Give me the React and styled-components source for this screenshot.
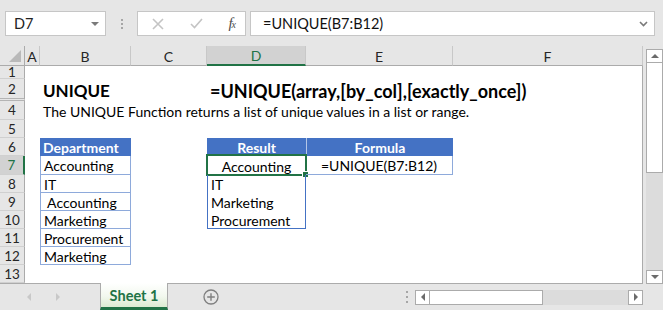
import React from 'react';
import styled, { createGlobalStyle, css } from 'styled-components';

const GREEN = '#217346';
const BLUE = '#4472c4';
const LIGHT_BLUE = '#8eaadb';

const GlobalStyle = createGlobalStyle`
  html, body {
    margin: 0;
    padding: 0;
    background: #e6e6e6;
  }
  body {
    font-family: Lato, "Liberation Sans", sans-serif;
    color: #000;
  }
`;

const Window = styled.div`
  width: 663px;
  height: 310px;
  background: #e6e6e6;
  display: flex;
  flex-direction: column;
  overflow: hidden;
`;

/* ---------- formula bar ---------- */

const FormulaBar = styled.div`
  height: 46px;
  box-sizing: border-box;
  padding: 11px 0 10px 5px;
  display: flex;
  align-items: stretch;
`;

const Box = styled.div`
  background: #fff;
  border: 1px solid #c6c6c6;
  box-sizing: border-box;
  display: flex;
  align-items: center;
`;

const NameBox = styled(Box)`
  width: 101px;
  padding: 0 6px 0 8px;
  justify-content: space-between;
  font-size: 14.5px;
  color: #222;
`;

const DownTriangle = styled.span`
  width: 0;
  height: 0;
  border-left: 4px solid transparent;
  border-right: 4px solid transparent;
  border-top: 4px solid #7a7a7a;
`;

const Grip = styled.div`
  width: 31px;
  display: flex;
  flex-direction: column;
  align-items: center;
  justify-content: center;
  gap: 2px;

  span {
    width: 2px;
    height: 2px;
    background: #a6a6a6;
  }
`;

const FxBox = styled(Box)`
  width: 109px;
  padding: 0 10px 0 14px;
  justify-content: space-between;
`;

const Fx = styled.span`
  font-family: "Liberation Serif", serif;
  font-style: italic;
  font-size: 15px;
  color: #4d4d4d;
  letter-spacing: -1px;

  sub {
    font-size: 10px;
    vertical-align: baseline;
  }
`;

const FormulaInput = styled(Box)`
  width: 405px;
  margin-left: 4px;
  padding: 0 6px 0 12px;
  justify-content: space-between;
  font-size: 14.5px;
  color: #111;
`;

/* ---------- sheet ---------- */

const Main = styled.div`
  flex: 1;
  display: flex;
  min-height: 0;
`;

const Sheet = styled.div`
  width: 643px;
  background: #fff;
  display: grid;
  grid-template-columns: 25px 15px 91px 76px 99px 147px 190px;
  grid-template-rows: 20px 13px 22px 19px 18px 18px 19px 18px 18px 18px 18px 18px 18px;
  border-right: 1px solid #ababab;
  border-bottom: 1px solid #ababab;
  box-sizing: border-box;
  font-size: 14px;
`;

const Corner = styled.div`
  background: #e6e6e6;
  border-right: 1px solid #ababab;
  border-bottom: 1px solid #ababab;
  position: relative;

  &::after {
    content: '';
    position: absolute;
    right: 3px;
    bottom: 3px;
    border-left: 12px solid transparent;
    border-bottom: 12px solid #b9b9b9;
  }
`;

const ColHead = styled.div`
  background: ${p => (p.$active ? '#d2d2d2' : '#e6e6e6')};
  border-right: 1px solid #c8c8c8;
  border-bottom: ${p => (p.$active ? `2px solid ${GREEN}` : '1px solid #ababab')};
  display: flex;
  align-items: center;
  justify-content: center;
  font-size: 14px;
  color: ${p => (p.$active ? GREEN : '#262626')};
  box-sizing: border-box;
  padding-top: 1px;
`;

const RowHead = styled.div`
  grid-column: 1;
  background: ${p => (p.$active ? '#d2d2d2' : '#e6e6e6')};
  border-right: ${p => (p.$active ? `2px solid ${GREEN}` : '1px solid #ababab')};
  border-bottom: ${p => (p.$hidden ? '3px double #b4b4b4' : '1px solid #d0d0d0')};
  display: flex;
  align-items: center;
  justify-content: center;
  font-size: 13.5px;
  color: ${p => (p.$active ? GREEN : '#262626')};
  box-sizing: border-box;
`;

const Cell = styled.div`
  grid-column: ${p => p.$span || 'auto'};
  display: flex;
  align-items: center;
  justify-content: ${p => (p.$center ? 'center' : 'flex-start')};
  padding: 1px 3px 0;
  white-space: pre;
  box-sizing: border-box;
  position: relative;
  font-size: ${p => p.$size || '14px'};
  font-weight: ${p => (p.$bold ? 700 : 400)};

  ${p => p.$head && css`
    background: ${BLUE};
    color: #fff;
    font-weight: 700;
  `}

  ${p => p.$table && css`
    border-left: 1px solid ${LIGHT_BLUE};
    border-right: 1px solid ${LIGHT_BLUE};
    border-bottom: 1px solid ${LIGHT_BLUE};
  `}

  ${p => p.$spill && css`
    border-left: 1px solid ${BLUE};
    border-right: 1px solid ${BLUE};
  `}

  ${p => p.$spillEnd && css`
    border-bottom: 1px solid ${BLUE};
  `}
`;

const Selection = styled.div`
  position: absolute;
  left: -2px;
  top: -2px;
  right: -2px;
  bottom: -1px;
  border: 2px solid ${GREEN};
  pointer-events: none;

  &::after {
    content: '';
    position: absolute;
    right: -4px;
    bottom: -4px;
    width: 5px;
    height: 5px;
    background: ${GREEN};
    border: 1px solid #fff;
  }
`;

/* ---------- scrollbars ---------- */

const VScroll = styled.div`
  width: 17px;
  margin-left: 3px;
  padding-top: 3px;
  display: flex;
  flex-direction: column;
`;

const ScrollButton = styled.div`
  width: ${p => (p.$vertical ? '17px' : '15px')};
  height: ${p => (p.$vertical ? '14px' : '15px')};
  box-sizing: border-box;
  background: #fff;
  border: 1px solid #ababab;
  display: flex;
  align-items: center;
  justify-content: center;
  flex-shrink: 0;
`;

const Arrow = styled.span`
  width: 0;
  height: 0;
  ${p => p.$dir === 'up' && css`
    border-left: 4px solid transparent;
    border-right: 4px solid transparent;
    border-bottom: 4px solid #6b6b6b;
  `}
  ${p => p.$dir === 'down' && css`
    border-left: 4px solid transparent;
    border-right: 4px solid transparent;
    border-top: 4px solid #6b6b6b;
  `}
  ${p => p.$dir === 'left' && css`
    border-top: 4px solid transparent;
    border-bottom: 4px solid transparent;
    border-right: 4px solid ${p.$light ? '#c8c8c8' : '#6b6b6b'};
  `}
  ${p => p.$dir === 'right' && css`
    border-top: 4px solid transparent;
    border-bottom: 4px solid transparent;
    border-left: 4px solid ${p.$light ? '#c8c8c8' : '#6b6b6b'};
  `}
`;

const VThumb = styled.div`
  height: 110px;
  background: #fff;
  border: 1px solid #ababab;
  border-top: none;
  box-sizing: border-box;
`;

const Track = styled.div`
  flex: 1;
  background: #dcdcdc;
`;

/* ---------- bottom bar ---------- */

const BottomBar = styled.div`
  height: 26px;
  display: flex;
  align-items: stretch;
`;

const Nav = styled.div`
  width: 100px;
  box-sizing: border-box;
  padding-left: 27px;
  display: flex;
  align-items: center;
  gap: 25px;
`;

const SheetTab = styled.div`
  width: 68px;
  box-sizing: border-box;
  margin-top: -1px;
  background: linear-gradient(#ffffff, #f2f8ee 55%, #dcebd2);
  border-left: 1px solid #ababab;
  border-right: 1px solid #ababab;
  border-bottom: 3px solid ${GREEN};
  display: flex;
  align-items: center;
  justify-content: center;
  font-weight: 700;
  font-size: 14.5px;
  color: ${GREEN};
`;

const AddSheet = styled.div`
  margin-left: 35px;
  display: flex;
  align-items: center;
`;

const HArea = styled.div`
  margin-left: auto;
  margin-right: 20px;
  display: flex;
  align-items: center;
`;

const HGrip = styled(Grip)`
  width: 16px;
  gap: 3px;
`;

const HScroll = styled.div`
  width: 228px;
  height: 15px;
  display: flex;
`;

const HThumb = styled.div`
  width: 113px;
  background: #fff;
  border: 1px solid #ababab;
  border-left: none;
  box-sizing: border-box;
`;

const CheckIcon = () => (
  <svg width="13" height="11" viewBox="0 0 13 11">
    <polyline points="1,6 4.5,9.5 12,1" fill="none" stroke="#c4c4c4" strokeWidth="1.6" />
  </svg>
);

const CrossIcon = () => (
  <svg width="12" height="12" viewBox="0 0 12 12">
    <path d="M1 1 L11 11 M11 1 L1 11" stroke="#c4c4c4" strokeWidth="1.6" />
  </svg>
);

const Chevron = () => (
  <svg width="9" height="6" viewBox="0 0 9 6">
    <polyline points="1,1 4.5,4.5 8,1" fill="none" stroke="#7a7a7a" strokeWidth="1.6" />
  </svg>
);

const PlusIcon = () => (
  <svg width="16" height="16" viewBox="0 0 16 16">
    <circle cx="8" cy="8" r="7" fill="none" stroke="#7f7f7f" strokeWidth="1.3" />
    <path d="M8 4.2 V11.8 M4.2 8 H11.8" stroke="#7f7f7f" strokeWidth="1.4" />
  </svg>
);

const columns = ['A', 'B', 'C', 'D', 'E', 'F'];

const departments = ['Accounting', 'IT', ' Accounting', 'Marketing', 'Procurement', 'Marketing'];
const results = ['Accounting', 'IT', 'Marketing', 'Procurement'];

const App = () => (
  <>
    <GlobalStyle />
    <Window>
      <FormulaBar>
        <NameBox>
          D7
          <DownTriangle />
        </NameBox>
        <Grip>
          <span />
          <span />
          <span />
        </Grip>
        <FxBox>
          <CrossIcon />
          <CheckIcon />
          <Fx>f<sub>x</sub></Fx>
        </FxBox>
        <FormulaInput>
          =UNIQUE(B7:B12)
          <Chevron />
        </FormulaInput>
      </FormulaBar>

      <Main>
        <Sheet>
          <Corner />
          {columns.map(c => (
            <ColHead key={c} $active={c === 'D'}>{c}</ColHead>
          ))}

          <RowHead>1</RowHead>
          <Cell $span="2 / 8" />

          <RowHead $hidden>2</RowHead>
          <Cell />
          <Cell $span="3 / 5" $bold $size="17px">UNIQUE</Cell>
          <Cell $span="5 / 8" $bold $size="18px">=UNIQUE(array,[by_col],[exactly_once])</Cell>

          <RowHead>4</RowHead>
          <Cell />
          <Cell $span="3 / 8">The UNIQUE Function returns a list of unique values in a list or range.</Cell>

          <RowHead>5</RowHead>
          <Cell $span="2 / 8" />

          <RowHead>6</RowHead>
          <Cell />
          <Cell $head>Department</Cell>
          <Cell />
          <Cell $head $center>Result</Cell>
          <Cell $head $center style={{ borderLeft: '1px solid #b4c6e7' }}>Formula</Cell>
          <Cell />

          {departments.map((dept, i) => {
            const row = i + 7;
            const result = results[i];
            const inSpill = i < results.length;
            return (
              <React.Fragment key={row}>
                <RowHead $active={row === 7}>{row}</RowHead>
                <Cell />
                <Cell $table>{dept}</Cell>
                <Cell />
                {inSpill ? (
                  <Cell $spill $spillEnd={i === results.length - 1} $center={i === 0}>
                    {result}
                    {i === 0 && <Selection />}
                  </Cell>
                ) : (
                  <Cell />
                )}
                {i === 0 ? (
                  <Cell $center style={{ borderRight: `1px solid ${LIGHT_BLUE}`, borderBottom: `1px solid ${LIGHT_BLUE}` }}>
                    =UNIQUE(B7:B12)
                  </Cell>
                ) : (
                  <Cell />
                )}
                <Cell />
              </React.Fragment>
            );
          })}

          <RowHead>13</RowHead>
          <Cell $span="2 / 8" />
        </Sheet>

        <VScroll>
          <ScrollButton $vertical><Arrow $dir="up" /></ScrollButton>
          <VThumb />
          <Track />
          <ScrollButton $vertical><Arrow $dir="down" /></ScrollButton>
        </VScroll>
      </Main>

      <BottomBar>
        <Nav>
          <Arrow $dir="left" $light />
          <Arrow $dir="right" $light />
        </Nav>
        <SheetTab>Sheet 1</SheetTab>
        <AddSheet>
          <PlusIcon />
        </AddSheet>
        <HArea>
          <HGrip>
            <span />
            <span />
            <span />
          </HGrip>
          <HScroll>
            <ScrollButton><Arrow $dir="left" /></ScrollButton>
            <HThumb />
            <Track />
            <ScrollButton><Arrow $dir="right" /></ScrollButton>
          </HScroll>
        </HArea>
      </BottomBar>
    </Window>
  </>
);

export default App;
